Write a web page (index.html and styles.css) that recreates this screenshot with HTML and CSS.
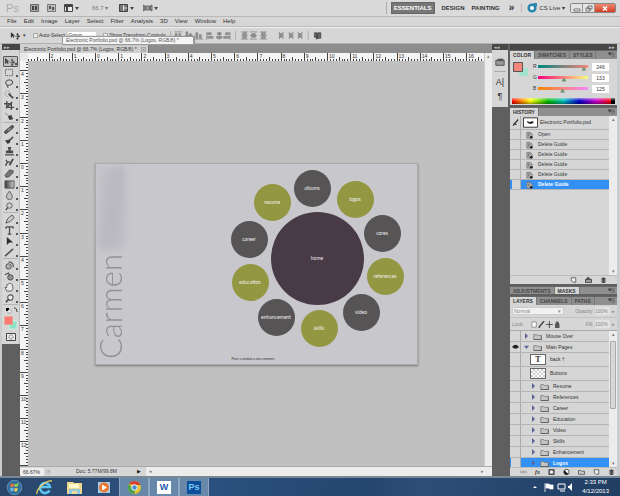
FILE: index.html
```html
<!DOCTYPE html>
<html lang="en">
<head>
<meta charset="utf-8">
<title>Electronic Portfolio.psd</title>
<link rel="stylesheet" href="styles.css">
</head>
<body>
<svg class="defs" aria-hidden="true">
  <symbol id="folder" viewBox="0 0 12 9"><path d="M1 2h4l1 1h5v5.500H1z" fill="#c4c4c4" stroke="#777"/><path d="M1 8.500h10.500V3" fill="none" stroke="#555"/></symbol>
  <symbol id="tri" viewBox="0 0 6 8"><path d="M1 0l4 4-4 4z" fill="#5b6398"/></symbol>
  <symbol id="trid" viewBox="0 0 8 6"><path d="M0 1h8L4 6z" fill="#5b6398"/></symbol>
  <symbol id="hist" viewBox="0 0 8 8"><path d="M1 1h4l2 2v4.500H1z" fill="#bbb" stroke="#777"/><path d="M2 3h3M2 5h2" stroke="#555"/><circle cx="6" cy="6.500" r="1.500" fill="#222"/></symbol>
  <symbol id="menu" viewBox="0 0 8 6"><path d="M0 1l2 3 2-3zM4 1h4M4 3h4M4 5h4" fill="#333" stroke="#555" stroke-width=".8"/></symbol>
  <symbol id="move" viewBox="0 0 12 10"><path d="M1 1v7l2-2 1 2 1-1-1-2h2z" fill="#333"/><path d="M9 3v6M6 6h6M9 2l-1 2h2zM9 10l-1-2h2zM12 6l-2-1v2z" stroke="#444" fill="#444" stroke-width=".8"/></symbol>
  <symbol id="trash" viewBox="0 0 8 8"><path d="M1 2h6M3 1h2M2 3h4v4.500H2zM4 3v4" fill="#888" stroke="#333"/></symbol>
  <symbol id="page" viewBox="0 0 8 8"><path d="M1 1h6v6H4L1 5z" fill="#eee" stroke="#444"/></symbol>
</svg>

<header class="appbar">
  <span class="logo">Ps</span>
  <button class="app-ico" aria-label="Bridge"><svg viewBox="0 0 9 8"><path d="M.5.500h8v7h-8z" fill="#aaa" stroke="#666"/><path d="M2 2h2v4H2zM5 2h2v4H5z" fill="#444"/></svg></button>
  <button class="app-ico" aria-label="Mini Bridge"><svg viewBox="0 0 9 8"><path d="M.5.500h8v7h-8z" fill="#bbb" stroke="#777"/><path d="M2 2h2v3H2zM5 3h2v3H5z" fill="#555"/></svg></button>
  <button class="app-ico wide" aria-label="View extras"><svg viewBox="0 0 15 8"><path d="M.5.500h8v7h-8z" fill="#eee" stroke="#444"/><path d="M1 2h7M3 2v5" stroke="#444" stroke-width="2"/><path d="M11 3h4l-2 3z" fill="#444"/></svg></button>
  <button class="app-zoom">66.7 <i>▾</i></button>
  <button class="app-ico wide" aria-label="Arrange documents"><svg viewBox="0 0 15 8"><path d="M.5.500h8v7h-8z" fill="#777" stroke="#444"/><path d="M4.500 1v6M5 4h3" stroke="#ddd"/><path d="M11 3h4l-2 3z" fill="#444"/></svg></button>
  <button class="app-ico wide" aria-label="Screen mode"><svg viewBox="0 0 15 8"><path d="M0 1l2 1v4L0 7zM9 1L7 2v4l2 1zM2.500 2h4v4h-4z" fill="#999" stroke="#555" stroke-width=".8"/><path d="M11 3h4l-2 3z" fill="#444"/></svg></button>
  <nav class="spaces">
    <button class="space on">ESSENTIALS</button>
    <button class="space">DESIGN</button>
    <button class="space">PAINTING</button>
    <button class="space more">»</button>
  </nav>
  <button class="cslive"><svg viewBox="0 0 10 10"><circle cx="5" cy="5" r="3.300" fill="#fff" stroke="#2a86ae" stroke-width="2.600"/><path d="M6 0h4v4z" fill="#2a86ae"/></svg>CS Live ▾</button>
  <div class="winbtns">
    <button aria-label="Minimize"><svg viewBox="0 0 10 7"><path d="M2 4h6v2H2z" fill="#fff" stroke="#555" stroke-width=".8"/></svg></button><button aria-label="Restore"><svg viewBox="0 0 10 7"><path d="M4 1h4v3H4zM2 3h4v3H2z" fill="#eee" stroke="#555" stroke-width=".8"/></svg></button><button class="close" aria-label="Close"><svg viewBox="0 0 10 7"><path d="M3 1.500l4 4M7 1.500l-4 4" stroke="#fff" stroke-width="1.500"/></svg></button>
  </div>
</header>

<nav class="menubar">
  <button>File</button><button>Edit</button><button>Image</button><button>Layer</button><button>Select</button><button>Filter</button><button>Analysis</button><button>3D</button><button>View</button><button>Window</button><button>Help</button>
</nav>

<div class="options">
  <svg class="opt-move"><use href="#move"/></svg><i class="caret">▾</i>
  <label><input type="checkbox">Auto-Select:</label>
  <select class="opt-select" aria-label="Auto-select target"><option>Group</option></select>
  <label><input type="checkbox">Show Transform Controls</label>
  <svg class="aligns" viewBox="0 0 118 10">
    <g fill="#999" stroke="#777" stroke-width=".7">
      <path d="M6 1h9M7 3h2v6H7zM11 3h2v4h-2zM18 5h9M19 1h2v8h-2zM23 3h2v4h-2zM29 9h9M30 2h2v6h-2zM34 4h2v4h-2z"/>
      <path d="M42 1v9M43 2h4v2h-4zM43 6h6v2h-6zM56 1v9M54 2h4v2h-4zM53 6h6v2h-6zM68 1v9M63 2h4v2h-4zM61 6h6v2h-6z"/>
      <path d="M80 1h8M80 5h8M80 9h8M82 2h4v2h-4zM82 6h4v2h-4zM90 1h8M90 5h8M90 9h8M92 3h4v4h-4zM101 1h8M101 5h8M101 9h8M103 2h4v2h-4zM103 6h4v2h-4z"/>
    </g>
    <path d="M2 0v10M74 0v10" stroke="#aaa"/>
  </svg>
  <svg class="aligns2" viewBox="0 0 50 10">
    <path d="M1 1v8M5 1v8M12 1v8M16 1v8M22 1v8M26 1v8M2 3h2v4H2zM13 3h2v4h-2zM23 3h2v4h-2z" fill="#999" stroke="#777" stroke-width=".8"/>
    <path d="M33 0v10" stroke="#aaa"/><path d="M40 2h3v5h-3zM44 2h3v6h-2l-3 1z" fill="#666" stroke="#333" stroke-width=".7"/>
  </svg>
  <div class="tooltip">Electronic Portfolio.psd @ 66.7% (Logos, RGB/8) *</div>
</div>

<main class="work">
  <aside class="tools">
    <div class="strip">▸▸</div>
    <div class="toolbox">
      <div class="group">
        <button class="on" aria-label="Move"><svg viewBox="0 0 12 10"><use href="#move"/></svg></button>
        <button aria-label="Marquee"><svg viewBox="0 0 12 10"><path d="M1.500 1.500h8v7h-8z" fill="none" stroke="#333" stroke-dasharray="1.500 1"/></svg></button>
        <button aria-label="Lasso"><svg viewBox="0 0 12 10"><path d="M3 6C0 4 3 1 6 1s5 3 2 5-5 0-5 1 2 1 1 3" fill="none" stroke="#444" stroke-width="1.200"/></svg></button>
        <button aria-label="Quick select"><svg viewBox="0 0 12 10"><circle cx="4" cy="4" r="3" fill="none" stroke="#666" stroke-dasharray="1 1"/><path d="M5 4l5 5" stroke="#333" stroke-width="2"/></svg></button>
        <button aria-label="Crop"><svg viewBox="0 0 12 10"><path d="M3 0v7h8M0 3h8v7M2 8l7-7" fill="none" stroke="#333" stroke-width="1.500"/></svg></button>
        <button aria-label="Eyedropper"><svg viewBox="0 0 12 10"><path d="M1 1l5 4" stroke="#777"/><path d="M4 5l4-2 2 5-4 1z" fill="#222"/></svg></button>
      </div>
      <div class="group">
        <button aria-label="Healing brush"><svg viewBox="0 0 12 10"><path d="M2 8l7-6" stroke="#444" stroke-width="4" stroke-linecap="round"/><path d="M4 6l3-2" stroke="#ccc"/></svg></button>
        <button aria-label="Brush"><svg viewBox="0 0 12 10"><path d="M10 1L5 6" stroke="#444" stroke-width="2"/><path d="M1 5l5-1 1 3-3 2z" fill="#222"/></svg></button>
        <button aria-label="Stamp"><svg viewBox="0 0 12 10"><path d="M4 0h4L7 4h3v3H2V4h3zM1 8h10v1.500H1z" fill="#333"/></svg></button>
        <button aria-label="History brush"><svg viewBox="0 0 12 10"><path d="M2 2l2 3M2 9c0-5 4-6 6-3" fill="none" stroke="#333" stroke-width="1.500"/><path d="M10 1L6 8" stroke="#333" stroke-width="2"/></svg></button>
        <button aria-label="Eraser"><svg viewBox="0 0 12 10"><path d="M1 7l5-6 4 1v2L5 9H2z" fill="#666" stroke="#333"/></svg></button>
        <button aria-label="Gradient"><svg viewBox="0 0 12 10"><path d="M1 1h10v8H1z" fill="url(#gr)" stroke="#333"/><defs><linearGradient id="gr"><stop stop-color="#222"/><stop offset="1" stop-color="#ccc"/></linearGradient></defs></svg></button>
        <button aria-label="Blur"><svg viewBox="0 0 12 10"><path d="M6 0C3 4 2 5 3 8c1 2 5 2 6 0 1-3-1-4-3-8z" fill="#bbb" stroke="#444"/></svg></button>
        <button aria-label="Dodge"><svg viewBox="0 0 12 10"><circle cx="6" cy="4" r="3" fill="#ccc" stroke="#444"/><path d="M4 6L2 9" stroke="#333" stroke-width="1.500"/></svg></button>
      </div>
      <div class="group">
        <button aria-label="Pen"><svg viewBox="0 0 12 10"><path d="M9 0l2 3-4 4-5 2 2-5z" fill="#ccc" stroke="#333"/></svg></button>
        <button aria-label="Type"><svg viewBox="0 0 12 10"><path d="M2 1h8v2M2 1v2M6 1v8M4 9h4" fill="none" stroke="#333" stroke-width="1.400"/></svg></button>
        <button aria-label="Path selection"><svg viewBox="0 0 12 10"><path d="M3 0v9l3-3 4 0z" fill="#111"/></svg></button>
        <button aria-label="Shape"><svg viewBox="0 0 12 10"><path d="M1 9L10 1" stroke="#444" stroke-width="2"/></svg></button>
      </div>
      <div class="group">
        <button aria-label="3D rotate"><svg viewBox="0 0 12 10"><circle cx="5" cy="6" r="3" fill="#aaa" stroke="#333"/><path d="M5 1c4 0 6 3 5 6" fill="none" stroke="#333" stroke-width="1.200"/></svg></button>
        <button aria-label="3D camera"><svg viewBox="0 0 12 10"><circle cx="7" cy="6" r="3" fill="#888" stroke="#333"/><path d="M1 3l4-2 1 3" fill="none" stroke="#333" stroke-width="1.200"/></svg></button>
        <button aria-label="Hand"><svg viewBox="0 0 12 10"><path d="M3 9L1 5l2 0V2l2-1 2-1 2 2 1 4-2 3z" fill="#eee" stroke="#444"/></svg></button>
        <button aria-label="Zoom"><svg viewBox="0 0 12 10"><circle cx="7" cy="4" r="3" fill="#eee" stroke="#444" stroke-width="1.200"/><path d="M5 6L2 9" stroke="#333" stroke-width="1.800"/></svg></button>
      </div>
      <svg class="mini" viewBox="0 0 14 8"><path d="M2 2h3v3H2z" fill="#000"/><path d="M4 4h3v3H4z" fill="#fff" stroke="#777" stroke-width=".5"/><path d="M10 2c2 0 3 1 3 4" fill="none" stroke="#333"/></svg>
      <svg class="swatch" viewBox="0 0 15 17"><path d="M6 7h8v8H6z" fill="#8fe3c6" stroke="#cdebe0"/><path d="M1.500 2.500h8v8h-8z" fill="#fb7b72" stroke="#e8a7a0" stroke-width=".8"/></svg>
      <svg class="mask" viewBox="0 0 10 8"><path d="M.5.500h9v7h-9z" fill="#eee" stroke="#444"/><circle cx="5" cy="4" r="2" fill="none" stroke="#555" stroke-dasharray="1 .6"/></svg>
    </div>
  </aside>

  <section class="doc">
    <div class="tabs"><span class="tab">Electronic Portfolio.psd @ 66.7% (Logos, RGB/8) * <button aria-label="Close document"><svg viewBox="0 0 5 5"><path d="M1 1l3 3M4 1L1 4" stroke="#555" stroke-width=".8"/></svg></button></span></div>
    <div class="view">
      <div class="corner"></div>
      <svg class="ruler-h" id="rh"></svg>
      <div class="vscroll top">▴</div>
      <svg class="ruler-v" id="rv"></svg>
      <div class="canvas">
        <div class="art">
          <div class="smudge"></div>
          <div class="name">Carmen</div>
          <div class="node home">home</div>
          <div class="node n1 gray">albums</div>
          <div class="node n2 green">logos</div>
          <div class="node n3 gray">cores</div>
          <div class="node n4 green">references</div>
          <div class="node n5 gray">video</div>
          <div class="node n6 green">skills</div>
          <div class="node n7 gray">enhancement</div>
          <div class="node n8 green">education</div>
          <div class="node n9 gray">career</div>
          <div class="node n10 green">resume</div>
          <div class="note">Place a window a new comment</div>
        </div>
      </div>
      <div class="vscroll"></div>
    </div>
    <div class="status"><input class="pct" aria-label="Zoom" value="66.67%"><span class="clk">◷</span><span class="size">Doc: 5.77M/99.8M</span><span class="arrow">▶</span><span class="hscroll"><i>◂</i><i>▸</i></span></div>
  </section>

  <aside class="dock">
    <div class="strip">◂◂</div>
    <div class="dock-body">
      <svg viewBox="0 0 12 12"><path d="M1 4h10v6H1z" fill="#999" stroke="#444"/><path d="M3 2h7v3H3z" fill="#555"/></svg>
      <hr><b>A|</b><b>¶</b>
    </div>
  </aside>

  <aside class="panels">
    <div class="strip right">▸▸</div>
    <section class="panel">
      <div class="ptabs"><button class="on">COLOR</button><button>SWATCHES</button><button>STYLES</button><svg><use href="#menu"/></svg></div>
      <div class="color">
        <svg class="bigsw" viewBox="0 0 17 18"><path d="M7 7h9v8H7z" fill="#a4e3cf"/><path d="M1.500 1.500h9v9h-9z" fill="#f6857d" stroke="#555"/></svg>
        <div class="sliders">
          <label><span>R</span><input type="range" class="r" min="0" max="255" value="246" aria-label="Red"><input type="text" value="246" aria-label="Red value"></label>
          <label><span>G</span><input type="range" class="g" min="0" max="255" value="133" aria-label="Green"><input type="text" value="133" aria-label="Green value"></label>
          <label><span>B</span><input type="range" class="b" min="0" max="255" value="125" aria-label="Blue"><input type="text" value="125" aria-label="Blue value"></label>
        </div>
        <div class="spectrum"></div>
      </div>
    </section>
    <section class="panel">
      <div class="ptabs"><button class="on">HISTORY</button><svg><use href="#menu"/></svg></div>
      <div class="history">
        <div class="rows">
          <div class="row snap"><span class="cell"><svg viewBox="0 0 8 8"><path d="M7 0L3 5l-2 2M2 4l3 2" stroke="#333" stroke-width="1.500"/></svg></span><svg class="thumb" viewBox="0 0 16 11"><path d="M.5.500h15v10H.5z" fill="#fff" stroke="#333"/><path d="M4 4l3 1 4-1v2L8 7 5 6z" fill="#222"/></svg>Electronic Portfolio.psd</div>
          <div class="row"><span class="cell"></span><svg class="hi"><use href="#hist"/></svg>Open</div>
          <div class="row"><span class="cell"></span><svg class="hi"><use href="#hist"/></svg>Delete Guide</div>
          <div class="row"><span class="cell"></span><svg class="hi"><use href="#hist"/></svg>Delete Guide</div>
          <div class="row"><span class="cell"></span><svg class="hi"><use href="#hist"/></svg>Delete Guide</div>
          <div class="row"><span class="cell"></span><svg class="hi"><use href="#hist"/></svg>Delete Guide</div>
          <div class="row sel"><span class="cell"></span><svg class="hi"><use href="#hist"/></svg>Delete Guide</div>
        </div>
        <div class="sb"><i>▴</i><i>▾</i></div>
      </div>
      <div class="foot"><svg><use href="#page"/></svg><svg viewBox="0 0 8 8"><path d="M0 3h8v4.500H0zM2 1h3v2H2z" fill="#999" stroke="#333"/></svg><svg><use href="#trash"/></svg></div>
    </section>
    <section class="panel">
      <div class="ptabs low"><button>ADJUSTMENTS</button><button class="on">MASKS</button><svg><use href="#menu"/></svg></div>
    </section>
    <section class="panel grow">
      <div class="ptabs"><button class="on">LAYERS</button><button>CHANNELS</button><button>PATHS</button><svg><use href="#menu"/></svg></div>
      <div class="blend"><select aria-label="Blend mode"><option>Normal</option></select><i class="drop">▾</i><label>Opacity: <input type="text" value="100%"></label><i>▸</i></div>
      <div class="blend lock"><span>Lock:</span><svg viewBox="0 0 32 8"><path d="M1 1h5v6H1z" fill="#fff" stroke="#888"/><path d="M15 0l-5 6-1 2" stroke="#444" stroke-width="1.600" fill="none"/><path d="M21 0v8M17 4h8" stroke="#444"/><path d="M28 3h4v5h-4zM29 3V1h2v2" fill="#555" stroke="#555"/></svg><label>Fill: <input type="text" value="100%"></label><i>▸</i></div>
      <div class="layers">
        <div class="rows">
          <div class="layer top"><span class="eye"></span><svg class="t"><use href="#tri"/></svg><svg class="f"><use href="#folder"/></svg>Mouse Over</div>
          <div class="layer top"><span class="eye"><svg viewBox="0 0 8 6"><path d="M0 3q4-5 8 0q-4 4-8 0z" fill="#222"/></svg></span><svg class="t"><use href="#trid"/></svg><svg class="f"><use href="#folder"/></svg>Main Pages</div>
          <div class="layer tall"><span class="eye"></span><span class="th txt">T</span>back †</div>
          <div class="layer tall"><span class="eye"></span><span class="th check"></span>Buttons</div>
          <div class="layer"><span class="eye"></span><svg class="t"><use href="#tri"/></svg><svg class="f"><use href="#folder"/></svg>Resume</div>
          <div class="layer"><span class="eye"></span><svg class="t"><use href="#tri"/></svg><svg class="f"><use href="#folder"/></svg>References</div>
          <div class="layer"><span class="eye"></span><svg class="t"><use href="#tri"/></svg><svg class="f"><use href="#folder"/></svg>Career</div>
          <div class="layer"><span class="eye"></span><svg class="t"><use href="#tri"/></svg><svg class="f"><use href="#folder"/></svg>Education</div>
          <div class="layer"><span class="eye"></span><svg class="t"><use href="#tri"/></svg><svg class="f"><use href="#folder"/></svg>Video</div>
          <div class="layer"><span class="eye"></span><svg class="t"><use href="#tri"/></svg><svg class="f"><use href="#folder"/></svg>Skills</div>
          <div class="layer"><span class="eye"></span><svg class="t"><use href="#tri"/></svg><svg class="f"><use href="#folder"/></svg>Enhancement</div>
          <div class="layer sel"><span class="eye"></span><svg class="t"><use href="#tri"/></svg><svg class="f"><use href="#folder"/></svg>Logos</div>
        </div>
        <div class="sb"><i>▴</i><i class="thumbbar"></i><i>▾</i></div>
      </div>
      <div class="foot spread"><svg viewBox="0 0 8 8"><path d="M0 3h4v2H0zM4 3h4v2H4z" fill="none" stroke="#999"/></svg><em>fx</em><svg viewBox="0 0 8 8"><path d="M.5.500h7v7h-7z" fill="#777" stroke="#333"/><circle cx="4" cy="4" r="2" fill="#fff"/></svg><svg viewBox="0 0 8 8"><circle cx="4" cy="4" r="3.500" fill="#fff" stroke="#222"/><path d="M1.500 1.500l5 5a3.500 3.500 0 0 1-5-5" fill="#222"/></svg><svg viewBox="0 0 8 8"><path d="M0 2h3l1 1h4v4H0z" fill="#ccc" stroke="#444"/></svg><svg><use href="#page"/></svg><svg><use href="#trash"/></svg></div>
    </section>
  </aside>
</main>

<footer class="taskbar">
  <button class="orb" aria-label="Start"><svg viewBox="0 0 20 19"><circle cx="10" cy="9.500" r="8.500" fill="#2f6f9e" stroke="#6f9cc0"/><path d="M5 6q2-2 4-1v4Q7 8 5 9z" fill="#f0703a"/><path d="M10 5q3 1 5-1l-1 4q-2 1-4 1z" fill="#9ccb4a"/><path d="M5 10q2-1 4 0v4q-2-1-4 0z" fill="#68b8e8"/><path d="M10 10q2 1 4 0l-1 4q-2 1-3 0z" fill="#f5cf4b"/></svg></button>
  <button aria-label="Internet Explorer"><svg viewBox="0 0 17 17"><path d="M13.500 11.500A5 5 0 1 1 14 8H4.500" fill="none" stroke="#5cc3f2" stroke-width="2.600"/><path d="M1 15C0 10 10 1 16 2" fill="none" stroke="#f1cf59" stroke-width="1.300"/></svg></button>
  <button aria-label="Explorer"><svg viewBox="0 0 17 17"><path d="M1 3h6l1 1h8v11H1z" fill="#ecd78b"/><path d="M3 5h10v4H3z" fill="#fff7c9"/><path d="M3 10h11v5H3z" fill="#93c9de"/><path d="M6 12h5v3H6z" fill="#f0dc94"/></svg></button>
  <button aria-label="Media Player"><svg viewBox="0 0 17 17"><path d="M2 3h12v11H2z" fill="#a9cfe4"/><circle cx="8" cy="8.500" r="5" fill="#ec7630"/><path d="M6 5.500l5 3-5 3z" fill="#fff"/></svg></button>
  <button class="run" aria-label="Chrome"><svg viewBox="0 0 17 17"><circle cx="8.500" cy="8.500" r="6.500" fill="#e5c52f"/><path d="M3 5a6.500 6.500 0 0 1 11.500 1H8z" fill="#d9402f"/><path d="M3 5a6.500 6.500 0 0 0 5 10l2-5-4-1z" fill="#49a34b"/><circle cx="8.500" cy="8.500" r="2.800" fill="#4c8fd0" stroke="#fff"/></svg></button>
  <button class="run word"><span>W</span></button>
  <button class="run ps"><span>Ps</span></button>
  <div class="tray"><svg viewBox="0 0 42 10"><path d="M1 6l2-2 2 2z" fill="#fff"/><path d="M13 1v9M14 2h3l1 1h3v4h-3l-1-1h-3z" fill="#fff" stroke="#fff" stroke-width=".8"/><path d="M26 2h7v5h-7zM28 9h5" fill="none" stroke="#fff"/><path d="M36 4h1l3-3v8l-3-3h-1z" fill="#fff"/></svg><time>2:33 PM<br>4/12/2013</time></div>
</footer>
<script src="rulers.js"></script>
</body>
</html>
```
FILE: styles.css
```css
* { box-sizing: border-box; }
html, body { height: 100%; }
body { margin: 0; display: flex; flex-direction: column; overflow: hidden; background: #d6d6d6; color: #333; font: 5px/7px "Liberation Sans", Arial, sans-serif; }
button, input, select { font: inherit; color: inherit; margin: 0; padding: 0; border: 0; background: none; border-radius: 0; appearance: none; min-width: 0; }
i { font-style: normal; }
svg { display: block; flex: none; }
.defs { position: absolute; width: 0; height: 0; }

.appbar { height: 17px; flex: none; display: flex; align-items: center; background: #dadada; border-bottom: 1px solid #b8b8b8; padding: 0 4px 0 6px; }
.logo { font-size: 11px; line-height: 14px; color: #aaa; width: 24px; }
.app-ico { width: 9px; margin-right: 8px; }
.app-ico svg { width: 100%; height: 8px; }
.app-ico.wide { width: 15px; margin-right: 9px; }
.app-zoom { width: 18px; margin: 0 9px 0 4px; color: #777; font-size: 6px; text-align: left; white-space: nowrap; }
.spaces { display: flex; margin-left: auto; gap: 7px; align-items: center; padding-left: 4px; border-left: 1px solid #aaa; }
.space { font: bold 6px/10px "Liberation Sans", Arial, sans-serif; white-space: nowrap; }
.space.on { background: #777; color: #fff; padding: 0 2px; border: 1px solid #666; }
.space.more { font-size: 10px; padding: 0 7px 0 2px; border-right: 1px solid #bbb; }
.cslive { display: flex; align-items: center; gap: 2px; margin: 0 5px; font-size: 6px; white-space: nowrap; }
.cslive svg { width: 10px; height: 10px; }
.winbtns { display: flex; border: 1px solid #888; border-radius: 2px; }
.winbtns button { width: 12px; height: 8px; background: #e4e4e4; border-right: 1px solid #999; }
.winbtns .close { width: 20px; background: linear-gradient(#ee8a70, #d43e22); border: 0; }
.winbtns svg { width: 10px; height: 7px; margin: auto; }

.menubar { height: 10px; flex: none; display: flex; align-items: center; gap: 7px; padding-left: 7px; border-bottom: 1px solid #bbb; font-size: 6px; }
.options { position: relative; height: 17px; flex: none; display: flex; align-items: center; padding: 0 0 0 10px; border-bottom: 1px solid #b0b0b0; border-top: 1px solid #eee; }
.opt-move { width: 10px; height: 9px; }
.caret { margin: 0 7px 0 3px; }
.options label { display: flex; align-items: center; gap: 1px; white-space: nowrap; }
.options input { width: 5px; height: 5px; border: 1px solid #aaa; background: #eee; }
.opt-select { width: 28px; margin: 0 7px 0 2px; background: #fff; }
.aligns { width: 108px; height: 9px; margin-left: 2px; }
.aligns2 { width: 50px; height: 9px; }
.tooltip { position: absolute; left: 62px; top: 8px; z-index: 2; padding: 0 3px; background: #f4f4f4; border: 1px solid #999; box-shadow: 1px 0 1px #999; white-space: nowrap; color: #555; width: 132px; }

.work { flex: 1; min-height: 0; display: flex; background: #5f5f5f; border-right: 3px solid #c9cdd0; border-left: 2px solid #c9cdd0; }
.strip { height: 6px; flex: none; background: #474747; color: #ccc; font-size: 5px; line-height: 6px; padding-left: 2px; }
.strip.right { text-align: right; padding-right: 2px; }
.tools { width: 18px; flex: none; }
.toolbox { background: #d6d6d6; padding: 6px 1px 3px; display: flex; flex-direction: column; align-items: center; border-right: 1px solid #bbb; }
.group { width: 100%; border-bottom: 1px solid #b4b4b4; margin-bottom: 1px; }
.group button { display: flex; align-items: center; justify-content: center; width: 100%; height: 11px; padding-right: 2px; position: relative; }
.group button::after { content: ""; position: absolute; right: 0; bottom: 1px; width: 2px; height: 2px; background: #555; }
.group svg { width: 11px; height: 9px; opacity: .85; }
.group .on { background: #c2c2c2; border: 1px solid #555; border-radius: 1px; }
.mini { width: 14px; height: 8px; }
.swatch { width: 15px; height: 17px; }
.mask { width: 10px; height: 8px; margin-top: 2px; }

.doc { flex: 1; min-width: 0; display: flex; flex-direction: column; }
.tabs { height: 9px; flex: none; background: #8d8d8d; display: flex; }
.tab { display: flex; align-items: center; gap: 4px; background: #d0d0d0; padding: 1px 2px 0 4px; white-space: nowrap; color: #333; border-right: 1px solid #777; }
.tab svg { width: 5px; height: 5px; border: 1px solid #aaa; }
.view { flex: 1; min-height: 0; display: grid; grid-template: 8px minmax(0, 1fr) / 8px minmax(0, 1fr) 8px; }
.corner { background: #e8e8e8; }
.ruler-h, .ruler-v { width: 100%; height: 100%; overflow: hidden; background: #f4f4f4; min-height: 0; }
.ruler-h text, .ruler-v text { font-size: 5px; fill: #333; }
.ruler-h path, .ruler-v path { stroke: #444; stroke-width: 1; }
.vscroll { background: #ececec; border-left: 1px solid #ccc; font-size: 5px; text-align: center; color: #888; }
.canvas { background: #c0c0c0; display: flex; align-items: center; justify-content: center; min-height: 0; overflow: hidden; }
.art { position: relative; flex: none; width: 323px; height: 202px; background: #c8c7cc; border: 1px solid #aaa; box-shadow: 0 1px 2px #777; }
.smudge { position: absolute; left: 2px; top: 3px; width: 28px; height: 82px; background: linear-gradient(100deg, #c3c2c8, #b5b4bc 55%, #c0bfc6); filter: blur(3px); opacity: .8; }
.name { position: absolute; left: 0; bottom: 4px; writing-mode: vertical-rl; transform: rotate(180deg); font: 300 31px/28px Lato, sans-serif; color: #929198; }
.node { position: absolute; width: 37px; height: 37px; border-radius: 50%; display: flex; align-items: center; justify-content: center; font: 5px/6px Lato, sans-serif; color: #eee; }
.gray { background: #575456; }
.green { background: #939742; }
.home { left: 175px; top: 48px; width: 93px; height: 93px; background: #483b45; }
.n1 { left: 198px; top: 6px; }
.n2 { left: 241px; top: 17px; }
.n3 { left: 268px; top: 51px; }
.n4 { left: 271px; top: 94px; }
.n5 { left: 247px; top: 130px; }
.n6 { left: 205px; top: 146px; }
.n7 { left: 162px; top: 135px; }
.n8 { left: 136px; top: 100px; }
.n9 { left: 135px; top: 57px; }
.n10 { left: 158px; top: 20px; }
.note { position: absolute; left: 136px; bottom: 3px; font: 3px/4px "Liberation Sans", sans-serif; color: #333; white-space: nowrap; }
.status { height: 10px; flex: none; display: flex; align-items: center; background: #d6d6d6; border-top: 1px solid #aaa; }
.pct { width: 24px; padding-left: 3px; background: #eee; height: 8px; }
.clk { width: 32px; padding-left: 2px; color: #777; }
.size { flex: none; width: 61px; }
.arrow { width: 9px; color: #222; }
.hscroll { flex: 1; display: flex; justify-content: space-between; padding: 0 8px 0 3px; background: #ececec; height: 100%; color: #777; align-items: center; }

.dock { width: 16px; flex: none; }
.dock-body { height: 57px; background: #d6d6d6; display: flex; flex-direction: column; align-items: center; padding-top: 7px; }
.dock-body svg { width: 10px; height: 10px; }
.dock-body hr { width: 12px; margin: 4px 0 3px; border: 0; border-top: 1px solid #aaa; }
.dock-body b { font: 9px/14px "Liberation Sans", sans-serif; }

.panels { width: 109px; flex: none; display: flex; flex-direction: column; border-left: 2px solid #5f5f5f; }
.panel { flex: none; margin-bottom: 2px; background: #d6d6d6; }
.panel.grow { flex: 1; min-height: 0; margin: 0; display: flex; flex-direction: column; }
.ptabs { height: 9px; flex: none; display: flex; background: #8f8f8f; border-top: 1px solid #666; }
.ptabs button { font: bold 5px/8px "Liberation Sans", Arial, sans-serif; padding: 0 3px; color: #444; border-right: 1px solid #777; }
.ptabs .on { background: #d6d6d6; color: #333; }
.ptabs svg { width: 7px; height: 5px; margin: 1px 2px 0 auto; }
.color { height: 46px; display: grid; grid-template: 37px 6px / 21px 1fr; padding: 2px; }
.bigsw { width: 17px; height: 18px; }
.sliders { display: flex; flex-direction: column; }
.sliders label { height: 11px; display: flex; align-items: center; }
.sliders span { width: 5px; }
.sliders input[type=range] { width: 50px; height: 3px; margin-right: 4px; }
.sliders input[type=text] { width: 17px; height: 8px; background: #fff; text-align: center; }
.r { background: linear-gradient(90deg, #00857d, #f6857d); }
.g { background: linear-gradient(90deg, #f6007d, #f6ff7d); }
.b { background: linear-gradient(90deg, #f68500, #f685ff); }
input[type=range]::-webkit-slider-thumb { appearance: none; width: 5px; height: 4px; margin-top: 4px; background: #6f8f6f; clip-path: polygon(50% 0, 100% 100%, 0 100%); }
.spectrum { grid-column: 1 / 3; background: linear-gradient(#fff8, #fff0, #0006), linear-gradient(90deg, #f00, #ff0 18%, #0b0 35%, #0bb 50%, #00c 65%, #c0c 82%, #f00 96%, #000 96%); }
.history { display: flex; height: 159px; }
.rows { flex: 1; min-width: 0; }
.row { height: 10px; display: flex; align-items: center; border-bottom: 1px solid #b5b5b5; white-space: nowrap; }
.cell { width: 9px; height: 100%; border-right: 1px solid #b0b0b0; margin: 0 5px 0 2px; flex: none; }
.cell svg { width: 7px; height: 8px; margin-top: 3px; }
.hi { width: 7px; height: 8px; margin-right: 5px; }
.snap { height: 14px; }
.snap .cell { margin-right: 2px; }
.thumb { width: 15px; height: 11px; margin-right: 2px; }
.sel { background: #3390f5; color: #fff; }
.row.sel, .layer.sel { font-weight: bold; }
.sel .cell, .sel .eye { background: #d6d6d6; }
.sb { width: 8px; flex: none; background: #ececec; display: flex; flex-direction: column; justify-content: space-between; align-items: center; color: #777; }
.foot { height: 9px; display: flex; align-items: center; justify-content: flex-end; gap: 8px; padding-right: 10px; border-top: 1px solid #bbb; }
.foot svg { width: 7px; height: 6px; }
.low { height: 8px; }
.blend { height: 12px; flex: none; display: flex; align-items: center; gap: 2px; padding: 0 2px; color: #888; white-space: nowrap; }
.blend select { width: 52px; height: 8px; background: #f1f1f1; border: 1px solid #ccc; padding-left: 1px; }
.drop { margin-left: -8px; }
.blend input { width: 15px; height: 8px; background: #e2e2e2; }
.blend label { margin-left: auto; }
.lock { height: 13px; border-top: 1px solid #c2c2c2; }
.lock svg { width: 32px; height: 7px; margin-left: 3px; }
.layers { flex: 1; min-height: 0; display: flex; overflow: hidden; border-top: 1px solid #aaa; }
.layer { height: 11px; display: flex; align-items: center; border-bottom: 1px solid #b5b5b5; white-space: nowrap; }
.layer.tall { height: 14px; }
.eye { width: 10px; height: 100%; border-right: 1px solid #aaa; margin: 0 10px 0 1px; padding: 2px 1px; flex: none; }
.layer.top .eye { margin-right: 3px; }
.layer.tall .eye { margin-right: 9px; }
.eye svg { width: 7px; height: 6px; }
.t { width: 5px; height: 6px; margin-right: 4px; }
.f { width: 9px; height: 7px; margin-right: 4px; }
.th { width: 16px; height: 11px; border: 1px solid #666; background: #fff; margin-right: 4px; text-align: center; }
.th.txt { font: bold 8px/9px "Liberation Serif", serif; }
.check { background: repeating-conic-gradient(#ccc 0 25%, #fff 0 50%) 0 0 / 4px 4px; }
.thumbbar { width: 6px; height: 68px; margin-bottom: 49px; background: #d8d8d8; border: 1px solid #aaa; border-radius: 1px; }
.spread { flex: none; justify-content: space-between; padding: 0 12px 0 10px; }
.foot em { font: italic bold 6px/7px "Liberation Serif", serif; }

.taskbar { height: 20px; flex: none; display: flex; align-items: center; background: linear-gradient(100deg, #2a466a, #2c5280 30%, #24466f 60%, #2d4e78 68%, #213e63); border-top: 2px solid #7a8794; padding-left: 2px; }
.taskbar button { width: 30px; height: 18px; display: flex; align-items: center; justify-content: center; }
.taskbar .orb { width: 25px; }
.taskbar svg { width: 17px; height: 17px; }
.orb { margin-right: 2px; }
.taskbar .run { background: #6788a8; border: 1px solid #91a9c0; border-width: 0 1px; }
.run span { font: bold 9px/13px "Liberation Sans", sans-serif; width: 14px; background: #fff; color: #2159a8; }
.run.ps span { background: #0b4f9b; color: #7cc9f5; }
.tray { margin-left: auto; display: flex; align-items: center; gap: 8px; padding-right: 11px; color: #fff; }
.taskbar .tray svg { width: 42px; height: 10px; }
.tray time { font-size: 6px; line-height: 9px; text-align: center; }
```
FILE: rulers.js
```js
// Draws inch marks, eighth ticks and numbers on both rulers.
const INCH = 23.2;
function ruler(id, zero, length, vertical) {
  let d = "", labels = "";
  const first = -Math.floor(zero / INCH);
  for (let n = first - 1; zero + n * INCH < length; n++) {
    for (let k = 0; k < 8; k++) {
      const p = Math.round(zero + n * INCH + k * INCH / 8) + 0.5;
      const start = k === 0 ? 0 : k === 4 ? 4 : 6;
      d += vertical ? `M${start} ${p}H8` : `M${p} ${start}V8`;
    }
    // A number is drawn only where it fits whole.
    const at = zero + n * INCH + 2;
    if (at < 0 || at + 6 > length) continue;
    labels += vertical
      ? `<text x="1" y="${at + 4}">${Math.abs(n)}</text>`
      : `<text x="${at}" y="5">${Math.abs(n)}</text>`;
  }
  document.getElementById(id).innerHTML = `<path d="${d}"/>${labels}`;
}
ruler("rh", 67, 456, false);
ruler("rv", 102, 405, true);
```
